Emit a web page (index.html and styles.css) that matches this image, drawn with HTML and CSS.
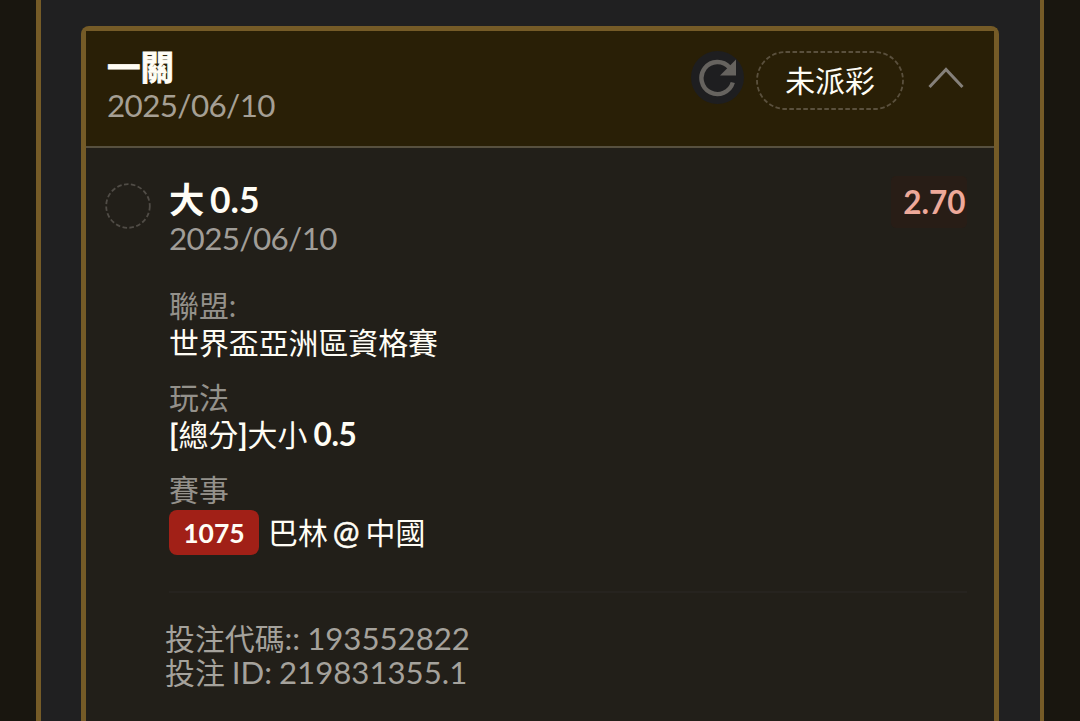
FILE: index.html
```
<!DOCTYPE html>
<html lang="zh-Hant">
<head>
    <meta charset="UTF-8">
    <meta name="viewport" content="width=device-width, initial-scale=1.0">
    <title>一關</title>
    <link rel="stylesheet" href="styles.css">
</head>
<body>

    <div class="container">
        <div class="card">
            <!-- Header -->
            <div class="card-header">
                <div class="card-heading">
                    <h1>一關</h1>
                    <p class="date">2025/06/10</p>
                </div>
                <button class="refresh">
                    <svg width="40" height="40" viewBox="0 0 40 40">
                        <path d="M31.5 9.5A16 16 0 1 0 34.8 24.5" fill="none" stroke="#66635f" stroke-width="4.4"/>
                        <path d="M38 1.5V17.5H22Z" fill="#66635f"/>
                    </svg>
                </button>
                <span class="status"><svg width="148" height="59"><rect x="1" y="1" width="146" height="57" rx="28.5"/></svg>未派彩</span>
                <svg class="arrow" width="36" height="22" viewBox="0 0 36 22">
                    <path d="M1.5 20L18 2.5L34.5 20" fill="none" stroke="#85807a" stroke-width="3"/>
                </svg>
            </div>

            <!-- Bet -->
            <div class="bet">
                <svg class="circle" width="46" height="46"><circle cx="23" cy="23" r="21.8"/></svg>
                <div class="bet-content">
                    <div class="bet-top">
                        <div>
                            <h2>大 0.5</h2>
                            <p class="date">2025/06/10</p>
                        </div>
                        <span class="odds">2.70</span>
                    </div>

                    <div class="info">
                        <p class="label">聯盟:</p>
                        <p class="value">世界盃亞洲區資格賽</p>
                    </div>
                    <div class="info">
                        <p class="label">玩法</p>
                        <p class="value"><b>[</b>總分<b>]</b>大小 <b class="total">0.5</b></p>
                    </div>
                    <div class="info">
                        <p class="label">賽事</p>
                        <p class="match"><span class="badge">1075</span><span class="teams">巴林<b>@</b>中國</span></p>
                    </div>

                    <div class="codes">
                        <p>投注代碼<span>:: 193552822</span></p>
                        <p>投注<span> ID: 219831355.1</span></p>
                    </div>
                </div>
            </div>
        </div>
    </div>

</body>
</html>
```
FILE: styles.css
```
body {
    font-family: Lato, "Noto Sans CJK TC", sans-serif;
    font-size: 29.9px;
    background-color: #19160f;
    color: #fffdf5;
    margin: 0;
    height: 721px;
    overflow: hidden;
}

h1, h2, p {
    margin: 0;
}

.container {
    box-sizing: border-box;
    height: 721px;
    margin: 0 36px;
    padding: 26px 40px 0 40px;
    background-color: #202021;
    border: solid #755b27;
    border-width: 0 4px 0 5px;
}

.card {
    box-sizing: border-box;
    width: 918px;
    height: 695px;
    border: 5px solid #755b27;
    border-bottom: none;
    border-radius: 8px 8px 0 0;
    background-color: #221f19;
}

.card-header {
    display: flex;
    align-items: flex-start;
    box-sizing: border-box;
    height: 117px;
    padding: 20px 30px 0 21px;
    background-color: #291f06;
    border-bottom: 2px solid #57503f;
}

.card-heading {
    flex: 1;
}

h1 {
    font-size: 33.6px;
    line-height: 34px;
    margin-top: -1px;
    margin-bottom: 1px;
    -webkit-text-stroke: 0.8px #fffdf5;
}

.date {
    font-size: 31.4px;
    line-height: 40px;
    letter-spacing: -0.62px;
    color: #a59f94;
}

.refresh {
    display: flex;
    align-items: center;
    justify-content: center;
    width: 53px;
    height: 53px;
    margin-right: 12px;
    padding: 0;
    border: none;
    border-radius: 50%;
    background-color: #1e1e20;
}

.refresh svg {
    flex-shrink: 0;
}

.status {
    position: relative;
    width: 148px;
    height: 59px;
    line-height: 59px;
    text-align: center;
}

/* dashed outline of the status pill */
.status svg {
    position: absolute;
    left: 0;
    top: 0;
}

.status rect, .circle circle {
    fill: none;
    stroke: #5a503d;
    stroke-width: 1.8;
    stroke-dasharray: 4.6 2.4;
}

.arrow {
    margin: 16px 0 0 24px;
}

.bet {
    display: flex;
    padding: 35px 27px 0 19px;
}

.circle circle {
    stroke: #504c46;
}

.bet-content {
    flex: 1;
    margin-left: 18px;
}

.bet-top {
    display: flex;
    justify-content: space-between;
    align-items: flex-start;
    height: 103px;
}

h2 {
    font-size: 35.4px;
    line-height: 36px;
    margin-top: -1px;
    word-spacing: -3px;
}

.bet-top .date {
    line-height: 40px;
    color: #a09d98;
}

.odds {
    box-sizing: border-box;
    width: 76px;
    height: 52px;
    margin-top: -7px;
    padding-left: 11px;
    font-size: 31.5px;
    font-weight: bold;
    line-height: 53px;
    text-align: center;
    color: #eea99a;
    background-color: #281d16;
    border-radius: 5px;
}

.info {
    height: 92px;
}

.label {
    line-height: 38px;
    color: #94918b;
}

.value {
    line-height: 36px;
    word-spacing: -1.5px;
}

.total {
    font-size: 31.5px;
    letter-spacing: -0.3px;
}

.match {
    display: flex;
    align-items: center;
    height: 45px;
    margin-top: 2px;
}

.teams {
    line-height: 38px;
    padding-bottom: 2px;
}

.match b {
    margin: 0 6px 0 5px;
    font-size: 32px;
    font-weight: normal;
    -webkit-text-stroke: 0.5px #fffdf5;
}

.badge {
    width: 90px;
    height: 45px;
    margin-right: 9px;
    font-size: 26.5px;
    font-weight: bold;
    line-height: 46px;
    text-align: center;
    background-color: #a12017;
    border-radius: 8px;
}

.codes {
    margin-top: 29px;
    padding-top: 28px;
    border-top: 2px solid #26231f;
    color: #a5a29c;
}

.codes p {
    height: 34px;
    margin-left: -4px;
    line-height: 34px;
}

.codes span {
    font-size: 31.2px;
    white-space: pre;
    word-spacing: -1px;
}
```
